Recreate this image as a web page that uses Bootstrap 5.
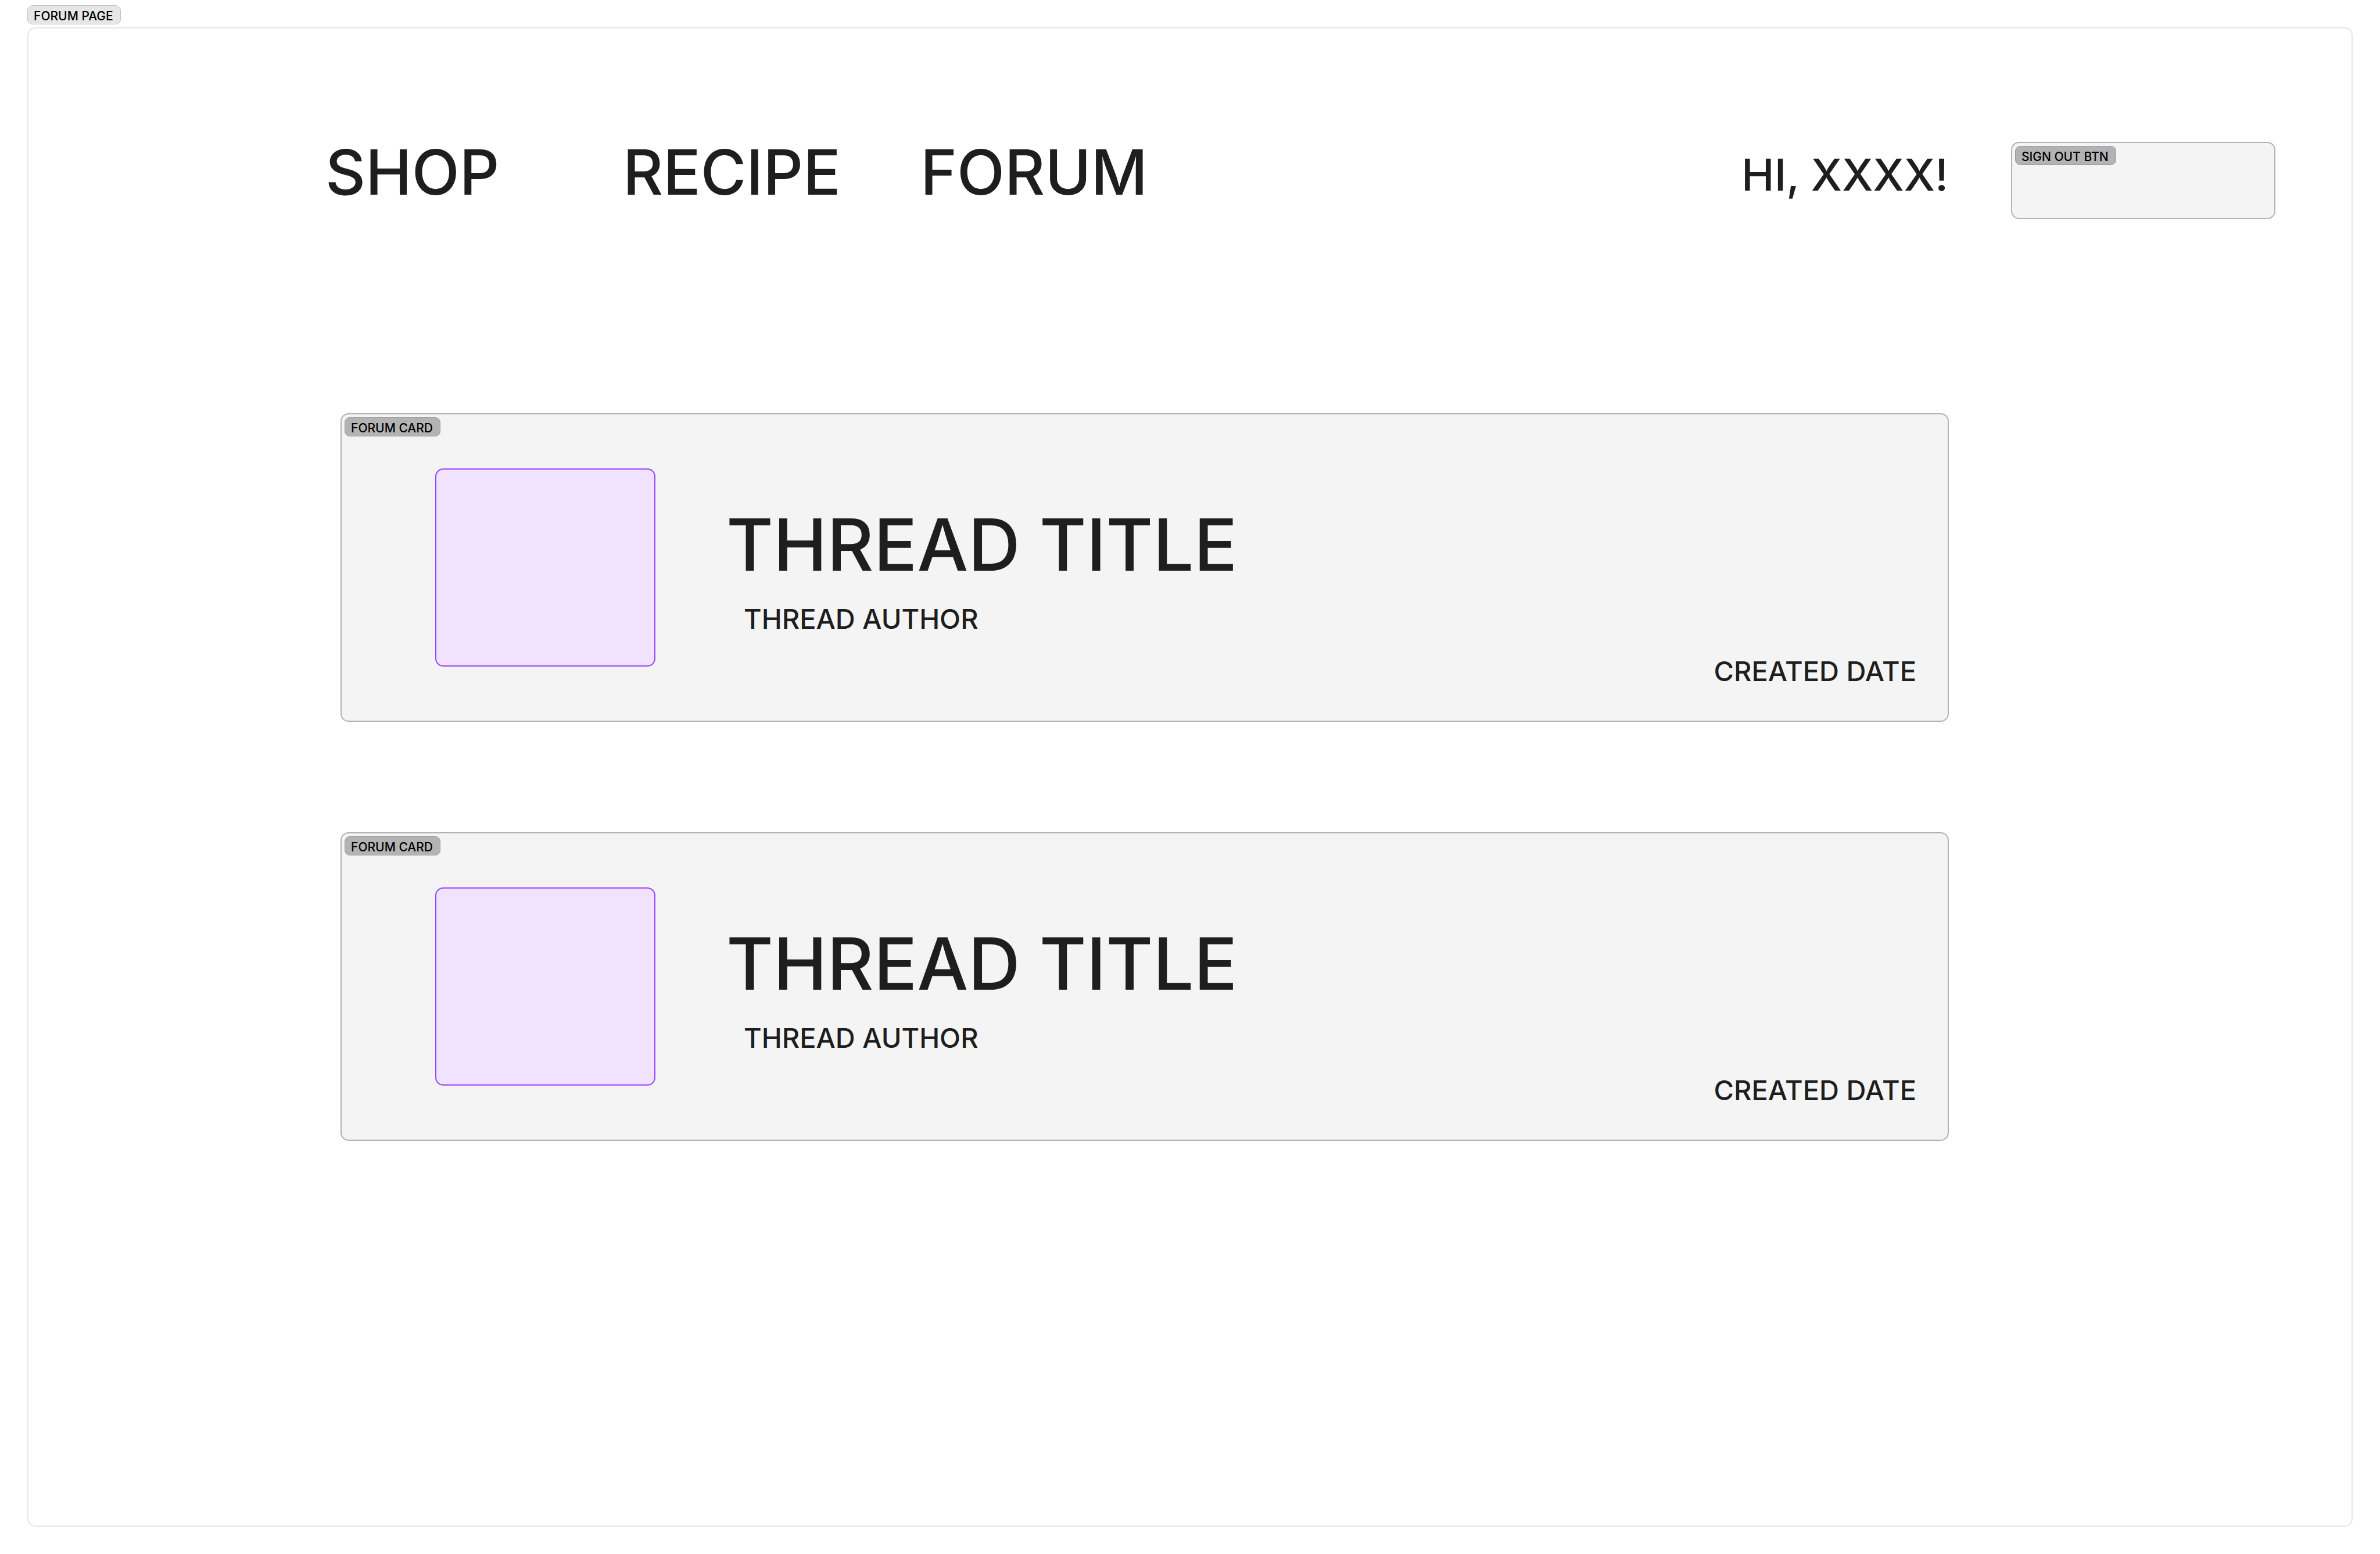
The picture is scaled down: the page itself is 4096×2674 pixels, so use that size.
<!DOCTYPE html>
<html lang="en">
<head>
<meta charset="utf-8">
<meta name="viewport" content="width=device-width, initial-scale=1">
<title>Forum page</title>
<link href="https://cdn.jsdelivr.net/npm/bootstrap@5.3.0/dist/css/bootstrap.min.css" rel="stylesheet">
<style>
  body { font-family: Inter, "Liberation Sans", sans-serif; font-weight: 500; color: #1e1e1e; background: #fff; padding: 9px 47px 47px; }
  .frame-tag { font-size: 21px; line-height: 26px; font-weight: 500; color: #000; padding: 5px 12px 0 10px; border: 1px solid #999; border-radius: 9px; background: #b3b3b3; white-space: nowrap; }
  .page-tag { background: #e6e6e6; border-color: #c4c4c4; margin-bottom: 5px; }
  .page-frame { border: 2px solid #e6e6e6; border-radius: 14px; padding-top: 195px; }
  .site-header { padding: 0 131px 0 511px; margin-bottom: 334px; }
  .site-nav .nav-link { font-size: 107px; line-height: 104px; color: inherit; min-width: 512px; }
  .greeting { font-size: 76px; line-height: 112px; margin-right: 108px; }
  .sign-out { width: 455px; height: 133px; padding: 5px; border: 2px solid #b3b3b3; border-radius: 14px; background: #f4f4f4; }
  .thread-list { padding: 0 693px 0 537px; gap: 190px; }
  .thread-card { padding: 93px 54px 57px 161px; border: 2px solid #b3b3b3; border-radius: 14px; background: #f4f4f4; }
  .card-tag { top: 5px; left: 5px; }
  .thread-image { width: 379px; height: 341px; margin: 0 122px 36px 0; border: 2px solid #9747ff; border-radius: 14px; background: #f1e3ff; }
  .thread-title { font-size: 124px; line-height: 148px; font-weight: 500; margin: 57px 0 26px; }
  .thread-meta { font-size: 47px; line-height: 56px; }
  .thread-author { padding-left: 30px; }
</style>
<script src="https://cdn.jsdelivr.net/npm/bootstrap@5.3.0/dist/js/bootstrap.bundle.min.js" defer></script>
</head>
<body class="d-flex flex-column min-vh-100">
  <div class="frame-tag page-tag align-self-start">FORUM PAGE</div>
  <div class="page-frame flex-grow-1">
    <header class="site-header d-flex align-items-start">
      <nav class="site-nav nav flex-nowrap" aria-label="Main">
        <a class="nav-link p-0" href="#shop">SHOP</a>
        <a class="nav-link p-0" href="#recipe">RECIPE</a>
        <a class="nav-link p-0" href="#forum">FORUM</a>
      </nav>
      <div class="greeting ms-auto text-nowrap">HI, XXXX!</div>
      <button type="button" class="sign-out d-flex align-items-start justify-content-start flex-shrink-0"><span class="frame-tag">SIGN OUT BTN</span></button>
    </header>
    <main class="thread-list d-flex flex-column">
      <article class="thread-card position-relative d-flex">
        <span class="frame-tag card-tag position-absolute">FORUM CARD</span>
        <div class="thread-image flex-shrink-0"></div>
        <div>
          <h2 class="thread-title">THREAD TITLE</h2>
          <div class="thread-meta thread-author">THREAD AUTHOR</div>
        </div>
        <div class="thread-meta ms-auto align-self-end text-nowrap">CREATED DATE</div>
      </article>
      <article class="thread-card position-relative d-flex">
        <span class="frame-tag card-tag position-absolute">FORUM CARD</span>
        <div class="thread-image flex-shrink-0"></div>
        <div>
          <h2 class="thread-title">THREAD TITLE</h2>
          <div class="thread-meta thread-author">THREAD AUTHOR</div>
        </div>
        <div class="thread-meta ms-auto align-self-end text-nowrap">CREATED DATE</div>
      </article>
    </main>
  </div>
</body>
</html>
